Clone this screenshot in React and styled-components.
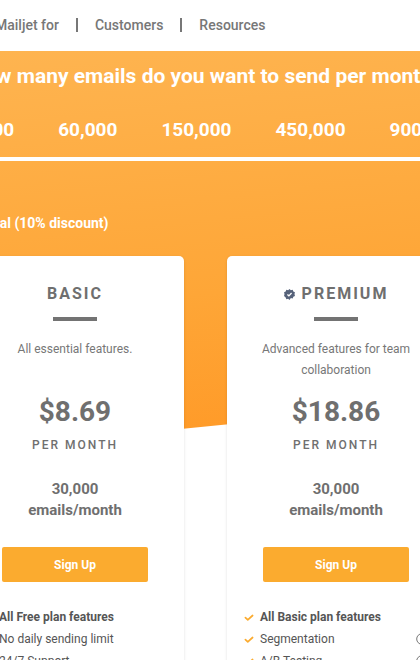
import React from 'react';
import styled, { createGlobalStyle } from 'styled-components';

const volumes = ['30,000', '60,000', '150,000', '450,000', '900,000'];

const plans = [
  {
    name: 'BASIC',
    description: 'All essential features.',
    price: '$8.69',
    features: [
      { text: 'All Free plan features', strong: true },
      { text: 'No daily sending limit' },
      { text: '24/7 Support' },
    ],
  },
  {
    name: 'PREMIUM',
    verified: true,
    description: 'Advanced features for team collaboration',
    price: '$18.86',
    features: [
      { text: 'All Basic plan features', strong: true },
      { text: 'Segmentation', info: true },
      { text: 'A/B Testing', info: true },
    ],
  },
];

const BadgeIcon = () => (
  <svg width="11" height="11" viewBox="0 0 24 24" aria-hidden="true">
    <path
      fill="#56627a"
      d="M12 0l3 2.6 3.9-.9 1.4 3.7 3.6 1.8-1 3.9 1 3.9-3.6 1.8-1.4 3.7-3.9-.9L12 24l-3-2.6-3.9.9-1.4-3.7L.1 15l1-3.9-1-3.9 3.6-1.8 1.4-3.7 3.9.9z"
    />
    <path fill="none" stroke="#fff" strokeWidth="2.8" d="M7.4 11.8l3.3 3.1 5.8-6.2" />
  </svg>
);

const CheckIcon = () => (
  <svg width="10" height="10" viewBox="0 0 10 10" aria-hidden="true">
    <path
      fill="none"
      stroke="#fbab2f"
      strokeWidth="1.7"
      strokeLinecap="round"
      strokeLinejoin="round"
      d="M1.4 5.6l2.4 2.2 4.8-4.3"
    />
  </svg>
);

const InfoIcon = () => (
  <svg width="12" height="12" viewBox="0 0 12 12" aria-hidden="true">
    <circle cx="6" cy="6" r="5.3" fill="none" stroke="#777" strokeWidth="1" />
    <path fill="none" stroke="#777" strokeWidth="1.2" d="M6 3v1.2M6 5.2V9" />
  </svg>
);

const Plan = ({ plan }) => (
  <Card>
    <PlanName>
      {plan.verified && <BadgeIcon />}
      {plan.name}
    </PlanName>
    <Divider />
    <Description>{plan.description}</Description>
    <Price>{plan.price}</Price>
    <Period>PER MONTH</Period>
    <Quota>
      30,000
      <br />
      emails/month
    </Quota>
    <SignUp type="button">Sign Up</SignUp>
    <Features>
      {plan.features.map((feature) => (
        <Feature key={feature.text} $strong={feature.strong}>
          <CheckIcon />
          <span>{feature.text}</span>
          {feature.info && <InfoIcon />}
        </Feature>
      ))}
    </Features>
  </Card>
);

export default function App() {
  return (
    <Page>
      <GlobalStyle />
      <Nav>
        <NavLink href="#mailjet-for">Mailjet for</NavLink>
        <NavLink href="#customers">Customers</NavLink>
        <NavLink href="#resources">Resources</NavLink>
      </Nav>
      <Hero>
        <Title>How many emails do you want to send per month?</Title>
        <Volumes>
          {volumes.map((volume) => (
            <Volume key={volume} type="button">
              {volume}
            </Volume>
          ))}
        </Volumes>
        <Billing>
          <input type="radio" name="billing" defaultChecked />
          Annual (10% discount)
        </Billing>
      </Hero>
      <Plans>
        {plans.map((plan) => (
          <Plan key={plan.name} plan={plan} />
        ))}
      </Plans>
    </Page>
  );
}

const GlobalStyle = createGlobalStyle`
  *, *::before, *::after {
    box-sizing: border-box;
  }
  body {
    margin: 0;
    background: #fff;
    color: #6f6f6f;
    font-family: Roboto, 'Liberation Sans', sans-serif;
  }
  h1, h2, p, ul {
    margin: 0;
    padding: 0;
  }
  button {
    border: 0;
    padding: 0;
    font-family: inherit;
    cursor: pointer;
  }
`;

const Page = styled.div`
  overflow: hidden;
`;

const Nav = styled.nav`
  display: flex;
  align-items: center;
  height: 51px;
  margin-left: -22px;
  padding-bottom: 2px;
  white-space: nowrap;
`;

const NavLink = styled.a`
  padding: 0 17px;
  color: #777;
  font-size: 14px;
  font-weight: 500;
  line-height: 14px;
  text-decoration: none;

  & + & {
    border-left: 2px solid #777;
  }
`;

const Hero = styled.header`
  height: 396px;
  background: linear-gradient(174deg, #feb450 0%, #fea637 60%, #ff9825 100%);
  clip-path: polygon(0 0, 100% 0, 100% calc(100% - 42px), 0 100%);
  color: #fff;
`;

const Title = styled.h1`
  display: flex;
  justify-content: center;
  padding: 12px 8px 0 0;
  font-size: 21px;
  font-weight: 700;
  line-height: 26px;
  white-space: nowrap;
`;

const Volumes = styled.div`
  display: flex;
  gap: 44px;
  margin-left: -45px;
  padding: 29px 0 15px;
  border-bottom: 4px solid #fff;
`;

const Volume = styled.button`
  flex: none;
  background: none;
  color: #fff;
  font-size: 19px;
  font-weight: 700;
  line-height: 24px;
`;

const Billing = styled.label`
  display: flex;
  align-items: center;
  gap: 8px;
  margin: 52px 0 0 -54px;
  font-size: 14px;
  font-weight: 700;
  line-height: 20px;
  white-space: nowrap;

  input {
    margin: 0;
  }
`;

const Plans = styled.main`
  position: relative;
  display: grid;
  grid-template-columns: 218px 218px;
  gap: 43px;
  margin: -191px 0 0 -34px;
`;

const Card = styled.section`
  display: flex;
  flex-direction: column;
  align-items: center;
  padding: 28px 17px 24px;
  border-radius: 5px;
  background: #fff;
  box-shadow: 0 1px 3px rgba(0, 0, 0, 0.12);
  text-align: center;
`;

const PlanName = styled.h2`
  display: flex;
  align-items: center;
  gap: 7px;
  font-size: 16px;
  font-weight: 700;
  letter-spacing: 2px;
  line-height: 20px;
`;

const Divider = styled.span`
  width: 44px;
  height: 4px;
  margin-top: 13px;
  background: #737373;
`;

const Description = styled.p`
  min-height: 42px;
  margin-top: 18px;
  color: #777;
  font-size: 12px;
  line-height: 21px;
`;

const Price = styled.p`
  margin-top: 14px;
  font-size: 28px;
  font-weight: 700;
  line-height: 34px;
`;

const Period = styled.p`
  margin-top: 7px;
  font-size: 12px;
  font-weight: 500;
  letter-spacing: 2px;
  line-height: 18px;
`;

const Quota = styled.p`
  margin-top: 25px;
  font-size: 15px;
  font-weight: 700;
  line-height: 21px;
`;

const SignUp = styled.button`
  width: 146px;
  height: 35px;
  margin-top: 26px;
  border-radius: 2px;
  background: #fbab2f;
  color: #fff;
  font-size: 12px;
  font-weight: 700;
`;

const Features = styled.ul`
  width: 100%;
  margin-top: 24px;
  list-style: none;
`;

const Feature = styled.li`
  display: flex;
  align-items: center;
  gap: 6px;
  color: #555;
  font-size: 12px;
  font-weight: ${({ $strong }) => ($strong ? 700 : 400)};
  line-height: 22px;
  text-align: left;

  span {
    flex: 1;
  }
`;
